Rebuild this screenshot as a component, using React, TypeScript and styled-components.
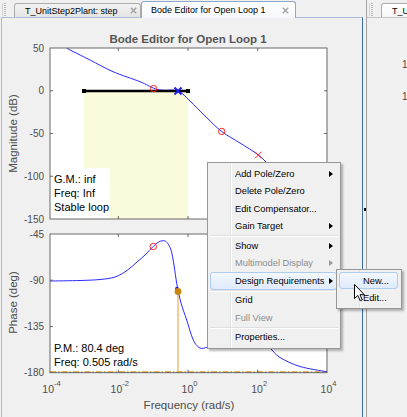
import React from 'react';
import styled, { createGlobalStyle } from 'styled-components';

const GlobalStyle = createGlobalStyle`
  html, body {
    margin: 0;
    padding: 0;
    background: #f0f0f0;
  }
`;

type Pt = [number, number];

// Catmull-Rom through the points, as cubic beziers
const smoothPath = (pts: Pt[]) => {
  let d = `M${pts[0][0]},${pts[0][1]}`;
  for (let i = 0; i < pts.length - 1; i++) {
    const p0 = pts[i - 1] || pts[i];
    const p1 = pts[i];
    const p2 = pts[i + 1];
    const p3 = pts[i + 2] || p2;
    const c1x = p1[0] + (p2[0] - p0[0]) / 6;
    const c1y = p1[1] + (p2[1] - p0[1]) / 6;
    const c2x = p2[0] - (p3[0] - p1[0]) / 6;
    const c2y = p2[1] - (p3[1] - p1[1]) / 6;
    d += ` C${c1x.toFixed(2)},${c1y.toFixed(2)} ${c2x.toFixed(2)},${c2y.toFixed(2)} ${p2[0]},${p2[1]}`;
  }
  return d;
};

const magPoints: Pt[] = [
  [66.7, 48.3], [90, 60], [113, 71.7], [140, 81.7], [153.3, 88], [162, 90.2],
  [178, 91], [190, 101], [205, 116], [221.7, 131.5], [240, 143], [258.3, 155],
  [272, 168], [290, 186], [310, 204], [327, 219],
];

const phasePoints: Pt[] = [
  [50, 281], [80, 280.5], [100, 279.5], [115, 277], [127, 270.5], [137, 262],
  [145, 255], [153.3, 246.5], [158, 242.3], [163.3, 240.7], [167, 242.5],
  [171, 250], [174, 265], [177, 285], [181, 303], [186.7, 320], [193.3, 340],
  [200, 348], [208, 347], [222, 343], [238, 340], [252, 340], [263, 342],
  [270, 348], [280, 357.5], [300, 366.5], [327, 371.8],
];

const X_TICKS = [
  { x: 50, exp: '-4' },
  { x: 118.3, exp: '-2' },
  { x: 188, exp: '0' },
  { x: 257.7, exp: '2' },
  { x: 327, exp: '4' },
];

const MAG = { left: 50, right: 327, top: 48, bottom: 219 };
const PHASE = { left: 50, right: 327, top: 234, bottom: 372.7 };

const magTicks = [
  { y: 48, label: '50' },
  { y: 90.75, label: '0' },
  { y: 133.5, label: '-50' },
  { y: 176.25, label: '-100' },
  { y: 219, label: '-150' },
];

const phaseTicks = [
  { y: 234, label: '-45' },
  { y: 280.2, label: '-90' },
  { y: 326.5, label: '-135' },
  { y: 372.7, label: '-180' },
];

const Root = styled.div`
  position: relative;
  width: 407px;
  height: 417px;
  overflow: hidden;
  display: flex;
  background: #f0f0f0;
  font-family: "Liberation Sans", Arial, sans-serif;
`;

const LeftPane = styled.div`
  flex: none;
  width: 363px;
  padding-left: 1px;
  box-sizing: border-box;
  display: flex;
  flex-direction: column;
`;

const TabStrip = styled.div`
  flex: none;
  height: 17px;
  display: flex;
  align-items: flex-end;
`;

const Grip = styled.div<{ $gapLeft: number; $gapRight: number }>`
  flex: none;
  width: 4px;
  height: 13px;
  margin: 0 ${({ $gapRight }) => $gapRight}px 1px ${({ $gapLeft }) => $gapLeft}px;
  border-left: 1px solid #d4d4d4;
  background-image: repeating-linear-gradient(
    to bottom,
    #b9b9b9 0px,
    #b9b9b9 1px,
    transparent 1px,
    transparent 2px
  );
  background-size: 2px 100%;
  background-repeat: no-repeat;
  background-position: 1px 0;
`;

const Tab = styled.div<{ $active?: boolean; $width: number }>`
  flex: none;
  position: relative;
  z-index: 1;
  box-sizing: border-box;
  width: ${({ $width }) => $width}px;
  height: ${({ $active }) => ($active ? 17 : 14)}px;
  margin-bottom: ${({ $active }) => ($active ? -1 : 0)}px;
  display: flex;
  align-items: center;
  padding-left: ${({ $active }) => ($active ? 9 : 10)}px;
  border: 1px solid ${({ $active }) => ($active ? '#8fa9c9' : '#acacac')};
  border-bottom: none;
  border-radius: 3px 3px 0 0;
  background: ${({ $active }) =>
    $active ? 'linear-gradient(#ffffff, #f6f8fb)' : 'linear-gradient(#f2f2f2, #e4e4e4)'};
  font-size: 9px;
  color: #000;
  white-space: nowrap;
`;

const TabLabel = styled.span`
  flex: none;
`;

const CloseBox = styled.svg<{ $right: number }>`
  flex: none;
  margin-left: auto;
  margin-right: ${({ $right }) => $right}px;
`;

const Document = styled.div`
  flex: 1;
  border-top: 1px solid #a9bdd6;
  border-left: 1px solid #a9bdd6;
  border-right: 1px solid #3a6ca6;
  background: #f0f0f0;
`;

const PlotSvg = styled.svg`
  display: block;
`;

const Splitter = styled.div`
  flex: none;
  width: 3px;
  display: flex;
  flex-direction: column;
`;

const SplitterDot = styled.div`
  width: 2px;
  height: 3px;
  margin: 208px 0 0 1px;
  background: #000;
`;

const RightPane = styled.div`
  flex: 1;
  min-width: 0;
  border-left: 1px solid #a2a2a2;
  overflow: hidden;
  display: flex;
  flex-direction: column;
`;

const RightBody = styled.div`
  flex: 1;
  border-top: 1px solid #c4c4c4;
  display: flex;
  flex-direction: column;
  gap: 20px;
  padding: 41px 0 0 35px;
`;

const AxisStub = styled.div`
  font-size: 10px;
  line-height: 12px;
  color: #4d4d4d;
`;

const Menu = styled.div<{ $left: number; $top: number; $width: number }>`
  position: absolute;
  left: ${({ $left }) => $left}px;
  top: ${({ $top }) => $top}px;
  width: ${({ $width }) => $width}px;
  box-sizing: border-box;
  padding: 2px;
  border: 1px solid #979797;
  background-color: #f0f0f0;
  background-image: linear-gradient(
    to right,
    transparent 22px,
    #e2e3e3 22px,
    #e2e3e3 23px,
    #ffffff 23px,
    #ffffff 24px,
    transparent 24px
  );
  box-shadow: 2px 2px 2px rgba(0, 0, 0, 0.28);
  font-size: 9.3px;
  z-index: 5;
`;

const MenuItem = styled.div<{ $disabled?: boolean; $hot?: boolean; $pad: number }>`
  position: relative;
  height: ${({ $pad }) => ($pad === 23 ? 17 : 17.5)}px;
  box-sizing: border-box;
  display: flex;
  align-items: center;
  padding-left: ${({ $pad }) => $pad}px;
  padding-right: 3px;
  margin-right: 1px;
  border: 1px solid ${({ $hot }) => ($hot ? '#aecbf0' : 'transparent')};
  border-radius: 3px;
  background: ${({ $hot }) =>
    $hot ? 'linear-gradient(#f3f8fe, #dfeafa)' : 'transparent'};
  color: ${({ $disabled }) => ($disabled ? '#8d8d8d' : '#000')};
  white-space: nowrap;
`;

const SubArrow = styled.span<{ $disabled?: boolean }>`
  margin-left: auto;
  width: 0;
  height: 0;
  border-top: 3px solid transparent;
  border-bottom: 3px solid transparent;
  border-left: 4px solid ${({ $disabled }) => ($disabled ? '#9a9a9a' : '#000')};
`;

const Separator = styled.div`
  height: 2px;
  box-sizing: border-box;
  border-top: 1px solid #e0e0e0;
  border-bottom: 1px solid #ffffff;
`;

const Cursor = styled.svg`
  position: absolute;
  left: 354px;
  top: 284px;
  z-index: 6;
`;

const CloseIcon = ({ right }: { right: number }) => (
  <CloseBox $right={right} width="7" height="7" viewBox="0 0 7 7">
    <path d="M0.8 0.8 L6.2 6.2 M6.2 0.8 L0.8 6.2" stroke="#a3a3a3" strokeWidth="1.4" />
  </CloseBox>
);

const TXT = '#4d4d4d';

const RedX = ({ x, y, s }: { x: number; y: number; s: number }) => (
  <path
    d={`M${x - s},${y - s} L${x + s},${y + s} M${x + s},${y - s} L${x - s},${y + s}`}
    stroke="#ff2020"
    strokeWidth="1"
    fill="none"
  />
);

const Axes = ({ box, yTicks }: { box: typeof MAG; yTicks: { y: number; label: string }[] }) => (
  <g>
    <rect
      x={box.left}
      y={box.top}
      width={box.right - box.left}
      height={box.bottom - box.top}
      fill="none"
      stroke="#5a5a5a"
      strokeWidth="0.9"
    />
    {X_TICKS.slice(1, -1).map((t) => (
      <g key={t.x} stroke="#5a5a5a" strokeWidth="0.9">
        <line x1={t.x} y1={box.top} x2={t.x} y2={box.top + 3} />
        <line x1={t.x} y1={box.bottom} x2={t.x} y2={box.bottom - 3} />
      </g>
    ))}
    {yTicks.slice(1, -1).map((t) => (
      <g key={t.y} stroke="#5a5a5a" strokeWidth="0.9">
        <line x1={box.left} y1={t.y} x2={box.left + 3} y2={t.y} />
        <line x1={box.right} y1={t.y} x2={box.right - 3} y2={t.y} />
      </g>
    ))}
    {yTicks.map((t) => (
      <text
        key={t.label}
        x={44}
        y={t.y}
        textAnchor="end"
        dominantBaseline="central"
        fontSize="10"
        fill={TXT}
      >
        {t.label}
      </text>
    ))}
  </g>
);

const BodePlot = () => (
  <PlotSvg width={360} height={399} viewBox="2 18 360 399">
    <defs>
      <clipPath id="magClip">
        <rect x={MAG.left} y={MAG.top} width={MAG.right - MAG.left} height={MAG.bottom - MAG.top} />
      </clipPath>
      <clipPath id="phaseClip">
        <rect
          x={PHASE.left}
          y={PHASE.top}
          width={PHASE.right - PHASE.left}
          height={PHASE.bottom - PHASE.top}
        />
      </clipPath>
    </defs>

    <text
      x={188}
      y={38.5}
      textAnchor="middle"
      dominantBaseline="central"
      fontSize="11.5"
      fontWeight="bold"
      fill="#555"
    >
      Bode Editor for Open Loop 1
    </text>

    {/* magnitude */}
    <rect x={MAG.left} y={MAG.top} width={MAG.right - MAG.left} height={MAG.bottom - MAG.top} fill="#fff" />
    <rect x={84} y={91} width={104} height={MAG.bottom - 91} fill="#fafadc" />
    <rect x={51} y={168} width={59} height={50.5} fill="#fff" />
    <text fontSize="11" fill="#000">
      <tspan x={54} y={183}>G.M.: inf</tspan>
      <tspan x={54} y={197.3}>Freq: Inf</tspan>
      <tspan x={54} y={211}>Stable loop</tspan>
    </text>
    <g clipPath="url(#magClip)">
      <path d={smoothPath(magPoints)} fill="none" stroke="#2a2aff" strokeWidth="1" />
    </g>
    <line x1={84} y1={91} x2={188} y2={91} stroke="#000" strokeWidth="2.4" />
    <rect x={82} y={89} width={4} height={4} fill="#000" />
    <rect x={186} y={89} width={4} height={4} fill="#000" />
    <circle cx={153.5} cy={88.6} r={3.2} fill="none" stroke="#ff2020" strokeWidth="1" />
    <circle cx={221.7} cy={131.5} r={3.2} fill="none" stroke="#ff2020" strokeWidth="1" />
    <RedX x={258.3} y={155} s={3.3} />
    <path d="M174.5,87.5 L181.5,94.5 M181.5,87.5 L174.5,94.5" stroke="#1a1ae6" strokeWidth="1.8" />
    <Axes box={MAG} yTicks={magTicks} />

    {/* phase */}
    <rect
      x={PHASE.left}
      y={PHASE.top}
      width={PHASE.right - PHASE.left}
      height={PHASE.bottom - PHASE.top}
      fill="#fff"
    />
    <text fontSize="11" fill="#000">
      <tspan x={54} y={352}>P.M.: 80.4 deg</tspan>
      <tspan x={54} y={366}>Freq: 0.505 rad/s</tspan>
    </text>
    <line x1={178} y1={291} x2={178} y2={372} stroke="#f3c98f" strokeWidth="1.8" />
    <line
      x1={PHASE.left}
      y1={372}
      x2={PHASE.right}
      y2={372}
      stroke="#d9962c"
      strokeWidth="1.6"
      strokeDasharray="6 2 1.5 2"
    />
    <g clipPath="url(#phaseClip)">
      <path d={smoothPath(phasePoints)} fill="none" stroke="#2a2aff" strokeWidth="1" />
    </g>
    <circle cx={153.3} cy={246.5} r={3.2} fill="none" stroke="#ff2020" strokeWidth="1" />
    <circle cx={177} cy={288.8} r={2} fill="#1a1ae6" />
    <circle cx={178} cy={291.5} r={3.4} fill="#c8860f" />
    <Axes box={PHASE} yTicks={phaseTicks} />

    {X_TICKS.map((t) => (
      <text key={t.x} x={t.x + 1.5} y={392.7} textAnchor="middle" fontSize="10.5" fill={TXT}>
        10
        <tspan dy={-6.5} fontSize="7.5">
          {t.exp}
        </tspan>
      </text>
    ))}

    <text x={189} y={405} textAnchor="middle" dominantBaseline="central" fontSize="11.5" fill={TXT}>
      Frequency (rad/s)
    </text>
    <text
      transform="translate(13 133.5) rotate(-90)"
      textAnchor="middle"
      dominantBaseline="central"
      fontSize="11.5"
      fill={TXT}
    >
      Magnitude (dB)
    </text>
    <text
      transform="translate(13 302.5) rotate(-90)"
      textAnchor="middle"
      dominantBaseline="central"
      fontSize="11.5"
      fill={TXT}
    >
      Phase (deg)
    </text>
  </PlotSvg>
);

const mainItems: Array<{ label: string; sub?: boolean; disabled?: boolean; hot?: boolean } | 'sep'> = [
  { label: 'Add Pole/Zero', sub: true },
  { label: 'Delete Pole/Zero' },
  { label: 'Edit Compensator...' },
  { label: 'Gain Target', sub: true },
  'sep',
  { label: 'Show', sub: true },
  { label: 'Multimodel Display', sub: true, disabled: true },
  { label: 'Design Requirements', sub: true, hot: true },
  'sep',
  { label: 'Grid' },
  { label: 'Full View', disabled: true },
  'sep',
  { label: 'Properties...' },
];

const App: React.FC = () => (
  <>
    <GlobalStyle />
    <Root>
      <LeftPane>
        <TabStrip>
          <Grip $gapLeft={1} $gapRight={7} />
          <Tab $width={127}>
            <TabLabel>T_UnitStep2Plant: step</TabLabel>
            <CloseIcon right={3} />
          </Tab>
          <Tab $active $width={155}>
            <TabLabel>Bode Editor for Open Loop 1</TabLabel>
            <CloseIcon right={6} />
          </Tab>
        </TabStrip>
        <Document>
          <BodePlot />
        </Document>
      </LeftPane>

      <Splitter>
        <SplitterDot />
      </Splitter>

      <RightPane>
        <TabStrip>
          <Grip $gapLeft={2} $gapRight={7} />
          <Tab $width={127} style={{ background: 'linear-gradient(#ffffff, #f7f7f7)' }}>
            <TabLabel>T_UnitStep2Plant: step</TabLabel>
          </Tab>
        </TabStrip>
        <RightBody>
          <AxisStub>1</AxisStub>
          <AxisStub>1</AxisStub>
        </RightBody>
      </RightPane>

      <Menu $left={207} $top={162} $width={134}>
        {mainItems.map((item, i) =>
          item === 'sep' ? (
            <Separator key={i} />
          ) : (
            <MenuItem key={i} $pad={24} $disabled={item.disabled} $hot={item.hot}>
              {item.label}
              {item.sub && <SubArrow $disabled={item.disabled} />}
            </MenuItem>
          ),
        )}
      </Menu>

      <Menu $left={336} $top={269} $width={66}>
        <MenuItem $pad={23} $hot>
          New...
        </MenuItem>
        <MenuItem $pad={23}>Edit...</MenuItem>
      </Menu>

      <Cursor width="12" height="18" viewBox="0 0 12 18">
        <path
          d="M0.5 0.5 L0.5 14.5 L3.8 11.4 L6.2 16.8 L8.3 15.9 L6 10.7 L10.3 10.7 Z"
          fill="#fff"
          stroke="#000"
          strokeWidth="1"
          strokeLinejoin="round"
        />
      </Cursor>
    </Root>
  </>
);

export default App;
